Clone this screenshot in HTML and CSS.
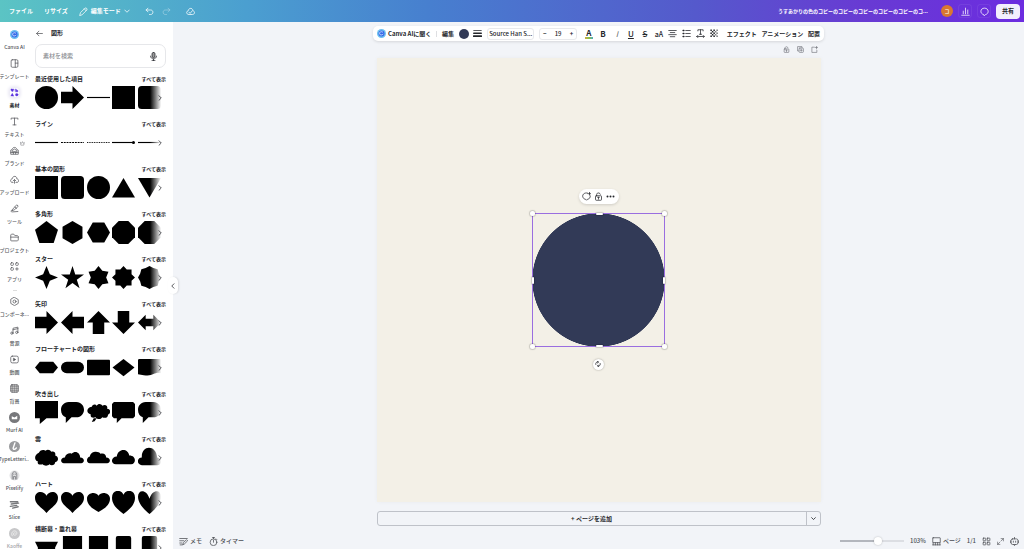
FILE: index.html
```html
<!DOCTYPE html>
<html lang="ja">
<head>
<meta charset="utf-8">
<title>デザインエディター</title>
<link rel="stylesheet" href="styles.css">
</head>
<body>
<svg class="defs" aria-hidden="true">
  <symbol id="circle" viewBox="0 0 24 24"><circle cx="12" cy="12" r="12"/></symbol>
  <symbol id="square" viewBox="0 0 24 24"><path d="M0 0h24v24H0z"/></symbol>
  <symbol id="rounded" viewBox="0 0 24 24"><rect width="24" height="24" rx="4"/></symbol>
  <symbol id="arrow-r" viewBox="0 0 24 24"><path d="M0 6h12V0l12 12-12 12v-6H0z"/></symbol>
  <symbol id="arrow-l" viewBox="0 0 24 24"><path d="M24 6H12V0L0 12l12 12v-6h12z"/></symbol>
  <symbol id="arrow-u" viewBox="0 0 24 24"><path d="M6 24V12H0L12 0l12 12h-6v12z"/></symbol>
  <symbol id="arrow-d" viewBox="0 0 24 24"><path d="M6 0v12H0l12 12 12-12h-6V0z"/></symbol>
  <symbol id="arrow-h" viewBox="0 0 24 24"><path d="M0 12l8-8v4h8V4l8 8-8 8v-4H8v4z"/></symbol>
  <symbol id="line" viewBox="0 0 24 24"><path d="M0 11.400h24v1.200H0z"/></symbol>
  <symbol id="line-dash" viewBox="0 0 24 24"><path d="M0 12h24" stroke="#000" stroke-width="1.300" stroke-dasharray="2 .9"/></symbol>
  <symbol id="line-dot" viewBox="0 0 24 24"><path d="M0 12h24" stroke="#000" stroke-width="1" stroke-dasharray="1 .8"/></symbol>
  <symbol id="line-end" viewBox="0 0 24 24"><path d="M0 11.400h21v1.200H0z"/><circle cx="22.400" cy="12" r="1.600"/></symbol>
  <symbol id="triangle" viewBox="0 0 24 24"><path d="M12 2l12 20.500H0z"/></symbol>
  <symbol id="triangle-d" viewBox="0 0 24 24"><path d="M0 2h24L12 22.500z"/></symbol>
  <symbol id="pentagon" viewBox="0 0 24 24"><path d="M12 0l12 9-4.500 14h-15L0 9z"/></symbol>
  <symbol id="hex-v" viewBox="0 0 24 24"><path d="M12 0l10.400 6v12L12 24 1.600 18V6z"/></symbol>
  <symbol id="hex-h" viewBox="0 0 24 24"><path d="M6 1.600h12L24 12l-6 10.400H6L0 12z"/></symbol>
  <symbol id="octagon" viewBox="0 0 24 24"><path d="M7 0h10l7 7v10l-7 7H7l-7-7V7z"/></symbol>
  <symbol id="star4" viewBox="0 0 24 24"><path d="M12 0l3.500 8.500L24 12l-8.500 3.500L12 24l-3.500-8.500L0 12l8.500-3.500z"/></symbol>
  <symbol id="star5" viewBox="0 0 24 24"><path d="M12 0l2.900 8.900H24l-7.500 5.500 2.900 8.900L12 17.800l-7.400 5.500 2.900-8.900L0 8.900h9.100z"/></symbol>
  <symbol id="star6" viewBox="0 0 24 24"><path d="M12 0l4 5 6.400 1L20 12l2.400 6-6.400 1-4 5-4-5-6.400-1L4 12 1.600 6 8 5z"/></symbol>
  <symbol id="star8" viewBox="0 0 24 24"><path d="M12 0l3.400 3.700h5v5L24 12l-3.600 3.400v5h-5L12 24l-3.400-3.600h-5v-5L0 12l3.600-3.400v-5h5z"/></symbol>
  <symbol id="star10" viewBox="0 0 24 24"><path d="M12 0l4 2.200 4.500 1.300 1.300 4.500L24 12l-2.200 4-1.300 4.500-4.500 1.300L12 24l-4-2.200-4.500-1.300L2.200 16 0 12l2.200-4 1.300-4.500L8 2.200z"/></symbol>
  <symbol id="flow-prep" viewBox="0 0 24 24"><path d="M5 6h14l5 6-5 6H5l-5-6z"/></symbol>
  <symbol id="flow-term" viewBox="0 0 24 24"><rect y="6" width="24" height="12" rx="6"/></symbol>
  <symbol id="flow-proc" viewBox="0 0 24 24"><rect y="4" width="24" height="16" rx="1"/></symbol>
  <symbol id="flow-dec" viewBox="0 0 24 24"><path d="M12 3l11.500 9L12 21 .5 12z"/></symbol>
  <symbol id="flow-doc" viewBox="0 0 24 24"><path d="M1 3h22l1 1v14c-7-2-8 4-18 2l-6-1V4z"/></symbol>
  <symbol id="say-square" viewBox="0 0 24 24"><path d="M0 0h24v18H12l-7 6v-6H0z"/></symbol>
  <symbol id="say-oval" viewBox="0 0 24 24"><path d="M8 1h8c5 0 8 4 8 8s-3 8-8 8h-5l-6 6v-6C2 16 0 13 0 9s3-8 8-8z"/></symbol>
  <symbol id="say-cloud" viewBox="0 0 24 24"><path d="M5 6c1-3 4-3 5-1 2-3 5-2 6 0 3-2 6 0 5 3 4 0 4 5 1 6 0 4-4 4-6 3-2 3-6 2-7 0-3 1-6 0-5-3-5-1-5-7 1-8zM7 18h3l-2 3-3 1z"/></symbol>
  <symbol id="say-round" viewBox="0 0 24 24"><path d="M2 1h20l2 2v13l-2 2H10l-5 5v-5H2l-2-2V3z"/></symbol>
  <symbol id="cloud1" viewBox="0 0 24 24"><path d="M4 7c2-4 6-3 7-2 2-2 5-1 6 1 3-1 5 1 4 4 4 1 4 6 0 7 0 3-4 4-6 2-2 2-5 2-7 0-3 1-6 0-5-3-4-1-4-7 1-9z"/></symbol>
  <symbol id="cloud2" viewBox="0 0 24 24"><path d="M3 18c-4 0-4-6 1-6 1-4 5-5 7-4 4-4 9-1 9 4 5 0 5 6 1 6z"/></symbol>
  <symbol id="cloud3" viewBox="0 0 24 24"><path d="M3 18c-4 0-4-6 0-7 1-6 9-6 11-3 4-1 6 1 6 4 5 0 5 6 1 6z"/></symbol>
  <symbol id="cloud4" viewBox="0 0 24 24"><path d="M4 19c-6 0-5-8 1-8C6 2 17 2 18 10c8 0 7 9 2 9z"/></symbol>
  <symbol id="cloud5" viewBox="0 0 24 24"><path d="M4 20c-6-1-5-8 0-8C3-1 19-2 20 12c6 1 5 8 0 8z"/></symbol>
  <symbol id="heart" viewBox="0 0 24 24"><path d="M12 23C7 17 0 14 0 7c0-7 9-8 12-2 3-6 12-5 12 2 0 7-7 10-12 16z"/></symbol>
  <symbol id="heart-s" viewBox="0 0 24 24"><path d="M12 22C5 18 0 14 0 8c0-6 9-8 12-3 3-5 12-3 12 3 0 6-5 10-12 14z"/></symbol>
  <symbol id="heart-t" viewBox="0 0 24 24"><path d="M12 24C7 20 0 15 0 7c0-9 10-9 12-3 2-6 12-6 12 3 0 8-7 13-12 17z"/></symbol>
  <symbol id="heart-n" viewBox="0 0 24 24"><path d="M12 24C7 20 0 13 0 6c0-8 9-8 12 2 3-10 12-10 12-2 0 7-7 14-12 18z"/></symbol>
  <symbol id="banner" viewBox="0 0 24 24"><path d="M0 6h24l-3 6v12H3V12z"/></symbol>
  <symbol id="banner-v" viewBox="0 0 24 24"><path d="M2 0h20v24H2z"/></symbol>
  <symbol id="banner-r" viewBox="0 0 24 24"><rect x="4" width="16" height="26" rx="2"/></symbol>
  <symbol id="chev-r" viewBox="0 0 24 24"><path d="M8 3l9 9-9 9"/></symbol>
  <symbol id="chev-l" viewBox="0 0 24 24"><path d="M16 3l-9 9 9 9"/></symbol>
  <symbol id="chev-d" viewBox="0 0 24 24"><path d="M3 8l9 9 9-9"/></symbol>
  <symbol id="pencil" viewBox="0 0 24 24"><path d="M2 22l2-7L16 3c3-2 7 2 5 5L9 20zM14 5l5 5"/></symbol>
  <symbol id="lock" viewBox="0 0 24 24"><rect x="4" y="10" width="16" height="12" rx="2"/><path d="M7 10V7c0-6 9-6 10-1M12 14v5M9.500 14h5"/></symbol>
  <symbol id="ai" viewBox="0 0 24 24"><circle cx="12" cy="12" r="12" fill="#6cc0f0" stroke="none"/><circle cx="12" cy="12" r="8" fill="#3568e8" stroke="none"/><path d="M15 8c-5-3-9 1-8 5 1 4 6 4 9 1" stroke="#e3f3ff" stroke-width="2"/></symbol>
</svg>

<header class="header">
  <nav class="menu">
    <button>ファイル</button>
    <button>リサイズ</button>
    <button class="mode"><svg class="ico s9"><use href="#pencil"/></svg>編集モード<svg class="ico s6"><use href="#chev-d"/></svg></button>
    <button aria-label="元に戻す"><svg class="ico s9" viewBox="0 0 24 24"><path d="M8 3L3 8l5 5M3 8h12c8 0 8 12 0 12h-3"/></svg></button>
    <button class="dim" aria-label="やり直し"><svg class="ico s9" viewBox="0 0 24 24"><path d="M16 3l5 5-5 5M21 8H9C1 8 1 20 9 20h3"/></svg></button>
    <button class="saved" aria-label="保存済み"><svg class="ico s9" viewBox="0 0 24 24"><path d="M7 20c-7 0-7-9-1-10C7 1 19 2 18 10c7 1 6 10 0 10zM8 14l3 3 5-6"/></svg></button>
  </nav>
  <div class="account">
    <span class="doc-title">うすあかりの色のコピーのコピーのコピーのコピーのコピーのコ...</span>
    <button class="avatar">コ</button>
    <button class="outline" aria-label="分析"><svg class="ico s9" viewBox="0 0 24 24"><path d="M2 22h20M6 18v-7M12 18V3M18 18V8"/></svg></button>
    <button class="outline" aria-label="コメント"><svg class="ico s9" viewBox="0 0 24 24"><path d="M9 20c-10-2-9-17 3-17s13 15 3 17l-3 3z"/></svg></button>
    <button class="share">共有</button>
  </div>
</header>

<div class="workspace">
  <nav class="rail">
    <a href="#"><svg class="ico s9"><use href="#ai"/></svg>Canva AI</a>
    <a href="#"><svg class="ico s9" viewBox="0 0 24 24"><rect x="3" y="2" width="18" height="20" rx="3"/><path d="M14 2v20M14 11h7"/></svg>テンプレート</a>
    <a href="#" class="active"><svg class="ico s9" viewBox="0 0 24 24"><path d="M6 10L2 5c0-4 4-3 4-1 0-2 4-3 4 1zM14 3h3v3h4v4h-6zM2 21l4-7 4 7z"/><circle cx="18" cy="18" r="3.500"/></svg>素材</a>
    <a href="#"><svg class="ico s9" viewBox="0 0 24 24"><path d="M3 6V3h18v3M12 3v18M8 21h8"/></svg>テキスト</a>
    <a href="#"><svg class="ico s9" viewBox="0 0 24 24"><path d="M2 21V11l4-2c1-7 11-7 12 0l4 2v10zM6 17v-5l6-4 6 4v5M2 17h20M9 21v-6h6v6"/></svg>ブランド<svg class="ico crown" viewBox="0 0 24 24"><path d="M3 7l5 4 4-8 4 8 5-4-3 13H6z"/></svg></a>
    <a href="#"><svg class="ico s9" viewBox="0 0 24 24"><path d="M8 20H6c-6-1-6-9 0-10C7 1 19 2 18 10c7 1 6 10 0 10h-2M12 22v-9M8 16l4-4 4 4"/></svg>アップロード</a>
    <a href="#"><svg class="ico s9" viewBox="0 0 24 24"><path d="M8 13L18 2l4 4-11 10-4 1zM7 17c-6-2-6 5 0 4l14-1M13 8l4 4"/></svg>ツール</a>
    <a href="#"><svg class="ico s9" viewBox="0 0 24 24"><path d="M2 19V5l2-2h6l3 4h7l2 2v10l-2 2H4zM2 11h20"/></svg>プロジェクト</a>
    <a href="#"><svg class="ico s9" viewBox="0 0 24 24"><rect x="2" y="2" width="7" height="7" rx="2"/><rect x="15" y="2" width="7" height="7" rx="2"/><rect x="2" y="15" width="7" height="7" rx="2"/><path d="M18.500 15v7M15 18.500h7"/></svg>アプリ</a>
    <hr>
    <a href="#"><svg class="ico s9" viewBox="0 0 24 24"><path d="M12 1l10 6v10l-10 6-10-6V7z"/><circle cx="12" cy="12" r="4"/></svg>コンポーネ...</a>
    <a href="#"><svg class="ico s9" viewBox="0 0 24 24"><path d="M8 19V6l13-3v13M8 10l13-3"/><circle cx="5" cy="19" r="3"/><circle cx="18" cy="17" r="3"/></svg>音源</a>
    <a href="#"><svg class="ico s9" viewBox="0 0 24 24"><rect x="2" y="3" width="20" height="18" rx="4"/><path d="M10 9l5 3-5 3z" fill="currentColor"/></svg>動画</a>
    <a href="#"><svg class="ico s9" viewBox="0 0 24 24"><rect x="2" y="2" width="20" height="20" rx="3" fill="#ccc"/><path d="M2 7h20M2 12h20M2 17h20M7 2v20M12 2v20M17 2v20" stroke-width="1"/></svg>背景</a>
    <a href="#"><svg class="ico s11" viewBox="0 0 24 24"><circle cx="12" cy="12" r="12" fill="#77787b" stroke="none"/><path d="M6 16V9l6 3 6-4v8z" fill="#fff" stroke="none"/></svg>Murf AI</a>
    <a href="#"><svg class="ico s11" viewBox="0 0 24 24"><circle cx="12" cy="12" r="12" fill="#9a9b9e" stroke="none"/><path d="M13 4l-4 12c0 3 5 3 7-1" stroke="#fff" stroke-width="3"/></svg>TypeLetteri...</a>
    <a href="#"><svg class="ico s11" viewBox="0 0 24 24"><circle cx="12" cy="12" r="11" fill="#e3e3e5" stroke="none"/><path d="M7 20V9c1-7 9-7 10 0v11M10 20v-6h4v6M10 9h1M14 9h1" stroke="#808186"/></svg>Pixelify</a>
    <a href="#"><svg class="ico s11" viewBox="0 0 24 24"><path d="M3 6h16M5 11l16-2M3 16l14-2M8 20l12-3" stroke="#77787b" stroke-width="3"/></svg>Slice</a>
    <a href="#" class="fading"><svg class="ico s11" viewBox="0 0 24 24"><circle cx="12" cy="12" r="12" fill="#9a9b9e" stroke="none"/><path d="M7 17c-4-6 2-13 8-10 5 4 0 11-5 8-2-3 1-6 4-4" stroke="#ddd"/></svg>Kaoffe</a>
  </nav>

  <aside class="panel">
    <div class="panel-title"><button aria-label="戻る"><svg class="ico s7" viewBox="0 0 24 24"><path d="M22 12H3M10 4l-8 8 8 8"/></svg></button><h1>図形</h1></div>
    <label class="search"><input type="text" placeholder="素材を検索" aria-label="素材を検索"><svg class="ico s9" viewBox="0 0 24 24"><rect x="8" y="1" width="8" height="14" rx="4" fill="#999"/><path d="M4 11c0 10 16 10 16 0M12 19v4M8 23h8"/></svg></label>

    <section><div class="head"><h2>最近使用した項目</h2><a href="#">すべて表示</a></div><div class="shapes"><svg><use href="#circle"/></svg><svg><use href="#arrow-r"/></svg><svg><use href="#line"/></svg><svg><use href="#square"/></svg><svg><use href="#rounded"/></svg><button class="more" aria-label="次へ"><svg class="ico s6"><use href="#chev-r"/></svg></button></div></section>
    <section><div class="head"><h2>ライン</h2><a href="#">すべて表示</a></div><div class="shapes"><svg><use href="#line"/></svg><svg><use href="#line-dash"/></svg><svg><use href="#line-dot"/></svg><svg><use href="#line-end"/></svg><svg><use href="#line"/></svg><button class="more" aria-label="次へ"><svg class="ico s6"><use href="#chev-r"/></svg></button></div></section>
    <section><div class="head"><h2>基本の図形</h2><a href="#">すべて表示</a></div><div class="shapes"><svg><use href="#square"/></svg><svg><use href="#rounded"/></svg><svg><use href="#circle"/></svg><svg><use href="#triangle"/></svg><svg><use href="#triangle-d"/></svg><button class="more" aria-label="次へ"><svg class="ico s6"><use href="#chev-r"/></svg></button></div></section>
    <section><div class="head"><h2>多角形</h2><a href="#">すべて表示</a></div><div class="shapes"><svg><use href="#pentagon"/></svg><svg><use href="#hex-v"/></svg><svg><use href="#hex-h"/></svg><svg><use href="#octagon"/></svg><svg><use href="#octagon"/></svg><button class="more" aria-label="次へ"><svg class="ico s6"><use href="#chev-r"/></svg></button></div></section>
    <section><div class="head"><h2>スター</h2><a href="#">すべて表示</a></div><div class="shapes"><svg><use href="#star4"/></svg><svg><use href="#star5"/></svg><svg><use href="#star6"/></svg><svg><use href="#star8"/></svg><svg><use href="#star10"/></svg><button class="more" aria-label="次へ"><svg class="ico s6"><use href="#chev-r"/></svg></button></div></section>
    <section><div class="head"><h2>矢印</h2><a href="#">すべて表示</a></div><div class="shapes"><svg><use href="#arrow-r"/></svg><svg><use href="#arrow-l"/></svg><svg><use href="#arrow-u"/></svg><svg><use href="#arrow-d"/></svg><svg><use href="#arrow-h"/></svg><button class="more" aria-label="次へ"><svg class="ico s6"><use href="#chev-r"/></svg></button></div></section>
    <section><div class="head"><h2>フローチャートの図形</h2><a href="#">すべて表示</a></div><div class="shapes"><svg><use href="#flow-prep"/></svg><svg><use href="#flow-term"/></svg><svg><use href="#flow-proc"/></svg><svg><use href="#flow-dec"/></svg><svg><use href="#flow-doc"/></svg><button class="more" aria-label="次へ"><svg class="ico s6"><use href="#chev-r"/></svg></button></div></section>
    <section><div class="head"><h2>吹き出し</h2><a href="#">すべて表示</a></div><div class="shapes"><svg><use href="#say-square"/></svg><svg><use href="#say-oval"/></svg><svg><use href="#say-cloud"/></svg><svg><use href="#say-round"/></svg><svg><use href="#say-oval"/></svg><button class="more" aria-label="次へ"><svg class="ico s6"><use href="#chev-r"/></svg></button></div></section>
    <section><div class="head"><h2>雲</h2><a href="#">すべて表示</a></div><div class="shapes"><svg><use href="#cloud1"/></svg><svg><use href="#cloud2"/></svg><svg><use href="#cloud3"/></svg><svg><use href="#cloud4"/></svg><svg><use href="#cloud5"/></svg><button class="more" aria-label="次へ"><svg class="ico s6"><use href="#chev-r"/></svg></button></div></section>
    <section><div class="head"><h2>ハート</h2><a href="#">すべて表示</a></div><div class="shapes"><svg><use href="#heart"/></svg><svg><use href="#heart"/></svg><svg><use href="#heart-s"/></svg><svg><use href="#heart-t"/></svg><svg><use href="#heart-n"/></svg><button class="more" aria-label="次へ"><svg class="ico s6"><use href="#chev-r"/></svg></button></div></section>
    <section><div class="head"><h2>横断幕・垂れ幕</h2><a href="#">すべて表示</a></div><div class="shapes"><svg><use href="#banner"/></svg><svg><use href="#banner-v"/></svg><svg><use href="#banner-v"/></svg><svg><use href="#banner-r"/></svg><svg><use href="#banner-r"/></svg><button class="more" aria-label="次へ"><svg class="ico s6"><use href="#chev-r"/></svg></button></div></section>
  </aside>

  <main class="stage">
    <button class="collapse" aria-label="パネルを閉じる"><svg class="ico s6"><use href="#chev-l"/></svg></button>
    <div class="toolbar">
      <button class="ask"><svg class="ico s9"><use href="#ai"/></svg>Canva AIに聞く</button>
      <span class="sep"></span>
      <button>編集</button>
      <button class="swatch" aria-label="カラー"></button>
      <button aria-label="線の太さ"><svg class="ico s9" viewBox="0 0 24 24"><path d="M2 4h20" stroke-width="2"/><path d="M2 11h20" stroke-width="4"/><path d="M2 19h20" stroke-width="5"/></svg></button>
      <button class="field font">Source Han S...</button>
      <div class="field size"><button aria-label="小さく">−</button><input type="text" value="19" aria-label="フォントサイズ"><button aria-label="大きく">+</button></div>
      <div class="tools">
        <button class="tcolor" aria-label="テキストの色"><span>A</span></button>
        <button class="glyph"><b>B</b></button>
        <button class="glyph thin"><i>I</i></button>
        <button class="glyph"><u>U</u></button>
        <button class="glyph"><s>S</s></button>
        <button class="glyph aa">aA</button>
        <button aria-label="配置中央"><svg class="ico s9" viewBox="0 0 24 24"><path d="M2 4h20M6 9.500h12M2 15h20M6 20.500h12"/></svg></button>
        <button aria-label="リスト"><svg class="ico s9" viewBox="0 0 24 24"><path d="M10 4h12M10 12h12M10 20h12"/><path d="M3 4h2M3 12h2M3 20h2" stroke-width="4"/></svg></button>
        <button aria-label="スペース"><svg class="ico s9" viewBox="0 0 24 24"><path d="M5 5V2h14v3M12 2v12M9 14h6M2 20h20M5 17l-3 3 3 3M19 17l3 3-3 3"/></svg></button>
        <button aria-label="透明度"><svg class="ico s9" viewBox="0 0 24 24"><g fill="currentColor" stroke="none"><path d="M1 1h4v4H1zM9 1h4v4H9zM5 5h4v4H5zM1 9h4v4H1zM9 9h4v4H9zM5 13h4v4H5zM1 17h4v4H1zM9 17h4v4H9z"/><path d="M17 1h4v4h-4zM13 5h4v4h-4zM17 9h4v4h-4zM13 13h4v4h-4zM17 17h4v4h-4z" opacity=".6"/></g></svg></button>
      </div>
      <button>エフェクト</button>
      <button>アニメーション</button>
      <button>配置</button>
    </div>

    <div class="page">
      <div class="page-tools">
        <button aria-label="ロック"><svg class="ico s7"><use href="#lock"/></svg></button>
        <button aria-label="複製"><svg class="ico s7" viewBox="0 0 24 24"><path d="M5 17H2V2h15v4"/><rect x="7" y="7" width="15" height="15" rx="3"/><path d="M14.500 11v7M11 14.500h7"/></svg></button>
        <button aria-label="ページを追加"><svg class="ico s7" viewBox="0 0 24 24"><path d="M11 4H3v18h17v-7M19 1v9M14 5h9"/></svg></button>
      </div>
      <div class="canvas">
        <div class="selection">
          <i class="h tl"></i><i class="h tr"></i><i class="h bl"></i><i class="h br"></i>
          <i class="bar t"></i><i class="bar b"></i><i class="bar l"></i><i class="bar r"></i>
          <div class="float">
            <button aria-label="コメント"><svg class="ico s9" viewBox="0 0 24 24"><path d="M15 3C5 0-1 9 3 15c2 4 5 4 6 4l3 3 3-3c5 0 8-5 7-9M20 1v7M16 4.500h7"/></svg></button>
            <button aria-label="ロック"><svg class="ico s9"><use href="#lock"/></svg></button>
            <button aria-label="その他"><svg class="ico s9" viewBox="0 0 24 24"><g fill="currentColor" stroke="none"><circle cx="4" cy="12" r="2.600"/><circle cx="12" cy="12" r="2.600"/><circle cx="20" cy="12" r="2.600"/></g></svg></button>
          </div>
          <button class="rotate" aria-label="回転"><svg class="ico s6" viewBox="0 0 24 24"><path d="M3 14C1 7 7 2 13 4M9 1l5 3-4 4M21 10c2 7-4 12-10 10M15 23l-5-3 4-4"/></svg></button>
        </div>
      </div>
      <div class="add-page"><button class="add">+ ページを追加</button><button class="add-menu" aria-label="ページの種類"><svg class="ico s5"><use href="#chev-d"/></svg></button></div>
    </div>

    <footer class="footer">
      <div class="group">
        <button><svg class="ico s9" viewBox="0 0 24 24"><path d="M2 4h20M2 10h11M2 16h6M10 20l2-5 8-8 3 3-8 8zM3 21h5"/></svg>メモ</button>
        <button><svg class="ico s9" viewBox="0 0 24 24"><circle cx="12" cy="14" r="9"/><path d="M12 14V9M9 1h6M12 1v4M19 5l2 2"/></svg>タイマー</button>
      </div>
      <div class="group right">
        <input class="zoom" type="range" min="0" max="100" value="60" aria-label="ズーム">
        <button>103%</button>
        <button><svg class="ico s9" viewBox="0 0 24 24"><rect x="2" y="2" width="20" height="13" rx="1"/><path d="M2 21h20M3 15v6M9 15v6M15 15v6M21 15v6"/></svg>ページ</button>
        <span>1/1</span>
        <button aria-label="グリッド"><svg class="ico s9" viewBox="0 0 24 24"><rect x="3" y="3" width="7" height="7" rx="1"/><rect x="14" y="3" width="7" height="7" rx="1"/><rect x="3" y="14" width="7" height="7" rx="1"/><rect x="14" y="14" width="7" height="7" rx="1"/></svg></button>
        <button aria-label="全画面"><svg class="ico s7" viewBox="0 0 24 24"><path d="M14 2h8v8M22 2l-8 8M10 22H2v-8M2 22l8-8"/></svg></button>
        <button aria-label="アシスタント"><svg class="ico s9" viewBox="0 0 24 24"><rect x="3" y="5" width="18" height="15" rx="4"/><path d="M12 5V1M1 10v5M23 10v5M9 11v3M15 11v3M10 20l2 3 2-3"/></svg></button>
      </div>
    </footer>
  </main>
</div>
</body>
</html>
```
FILE: styles.css
```css
* { box-sizing: border-box; }
html, body { margin: 0; height: 100%; }
body {
  display: flex;
  flex-direction: column;
  overflow: hidden;
  background: #f2f4f8;
  color: #24262b;
  font: 500 6px/10px "Noto Sans CJK JP", "Noto Sans", sans-serif;
}
button, input { font: inherit; color: inherit; }
button {
  display: inline-flex;
  align-items: center;
  justify-content: center;
  padding: 0;
  border: 0;
  background: none;
  white-space: nowrap;
}
a { color: inherit; text-decoration: none; }
h1, h2 { margin: 0; font-size: 6px; font-weight: 700; }
.defs { position: absolute; width: 0; height: 0; }
.ico {
  flex: none;
  fill: none;
  stroke: currentColor;
  stroke-width: 2;
  stroke-linecap: round;
  stroke-linejoin: round;
}
.s5 { width: 5px; height: 5px; stroke-width: 4; }
.s6 { width: 6px; height: 6px; stroke-width: 3; }
.s7 { width: 7px; height: 7px; }
.s9 { width: 9px; height: 9px; }
.s11 { width: 11px; height: 11px; }

.header {
  flex: none;
  display: flex;
  justify-content: space-between;
  align-items: center;
  height: 22px;
  padding: 0 4px 0 9px;
  color: #fff;
  background: linear-gradient(90deg, #5bc4c4 0%, #4b9fd0 24%, #477fcf 42%, #5559cc 68%, #683bd3 84%, #6c2ce0 100%);
}
.menu, .account { display: flex; align-items: center; }
.menu { gap: 11px; font-weight: 700; }
.mode { gap: 3px; }
.menu > .mode + button { margin-left: 4px; }
.menu > .dim { margin-left: -3px; color: #ffffff66; }
.menu > .saved { margin-left: 4px; }
.account { gap: 5px; }
.doc-title { margin-right: 8px; font-size: 5px; font-weight: 700; }
.avatar { width: 12px; height: 12px; border-radius: 50%; background: #d97730; font-size: 5px; }
.outline { width: 14px; height: 14px; border: 1px solid #ffffff12; border-radius: 3px; }
.share {
  width: 24px;
  height: 15px;
  border-radius: 4px;
  background: #f3effd;
  color: #24262b;
  font-weight: 700;
}

.workspace { flex: 1; display: flex; min-height: 0; }
.rail {
  flex: none;
  display: flex;
  flex-direction: column;
  width: 29px;
  padding-top: 7px;
  overflow: hidden;
  background: #fff;
  color: #55575c;
}
.rail a {
  flex: none;
  display: flex;
  flex-direction: column;
  align-items: center;
  justify-content: space-between;
  position: relative;
  height: 22px;
  margin-bottom: 7px;
  padding-top: 1px;
  font-size: 5px;
  line-height: 8px;
  white-space: nowrap;
}
.rail .s11 { margin-top: -1px; }
.rail .active { color: #24262b; font-weight: 700; }
.rail .active svg {
  color: #5a32e0;
  fill: currentColor;
  border-radius: 3px;
  box-shadow: 0 0 3px 2px #ecebf5;
  stroke-width: 1;
}
.rail .crown { position: absolute; right: 4px; top: -4px; width: 5px; height: 5px; }
.rail .fading { opacity: .55; }
.rail hr { flex: none; width: 4px; height: 1px; margin: 0 auto 5px; border: 0; background: #ddd; }

.panel {
  flex: none;
  width: 144px;
  padding: 6px 7px 0 6px;
  overflow: hidden;
  background: #fff;
}
.panel-title { display: flex; align-items: center; gap: 8px; padding-left: 1px; }
.search {
  display: flex;
  align-items: center;
  height: 24px;
  margin: 6px 0 6px;
  padding: 0 7px;
  border: 1px solid #e6e7ea;
  border-radius: 7px;
}
.search input { flex: 1; min-width: 0; padding: 0; border: 0; outline: 0; background: none; }
.search input::placeholder { color: #8b8d92; opacity: 1; }
.panel section { height: 45px; }
.head { display: flex; justify-content: space-between; align-items: center; }
.head a { font-size: 5px; font-weight: 700; }
.shapes {
  display: flex;
  justify-content: space-between;
  position: relative;
  margin: 2px 5px 0 0;
}
.shapes > svg { width: 23px; height: 23px; }
.more {
  position: absolute;
  right: -5px;
  top: 0;
  width: 16px;
  height: 23px;
  justify-content: flex-end;
  background: linear-gradient(90deg, #fff0, #fff 70%);
}
.more .ico { margin-right: 3px; }

.stage {
  flex: 1;
  display: flex;
  flex-direction: column;
  align-items: center;
  position: relative;
  min-width: 0;
  padding-top: 4px;
}
.collapse {
  position: absolute;
  left: -5px;
  top: 255px;
  width: 10px;
  height: 17px;
  border-radius: 5px;
  background: #fff;
  box-shadow: 1px 0 2px #0000001c;
}
.toolbar {
  display: flex;
  align-items: center;
  justify-content: space-between;
  width: 53%;
  min-width: 450px;
  height: 15px;
  padding: 0 4px;
  border-radius: 5px;
  background: #fff;
  box-shadow: 0 1px 3px #0000001f;
  font-weight: 700;
}
.ask { gap: 2px; }
.sep { width: 1px; height: 6px; background: #dedfe2; }
.swatch { width: 10px; height: 10px; border-radius: 50%; background: #323a57; }
.field { height: 12px; border: 1px solid #e8e9ec; border-radius: 3px; }
.font { padding: 0 1px; font-weight: 500; }
.size { display: flex; align-items: center; justify-content: space-around; width: 38px; }
.size input { width: 12px; padding: 0; border: 0; text-align: center; font-weight: 500; }
.tools { display: flex; align-items: center; }
.tools button { width: 14px; height: 12px; }
.glyph { font-size: 8px; font-weight: 500; }
.thin { font-weight: 400; color: #666; }
.tools .aa { font-size: 7px; }
.tcolor span {
  width: 8px;
  border-bottom: 2px solid;
  border-image: linear-gradient(90deg, #e8a13c, #8bc34a, #3aa0e8) 1;
  font-size: 8px;
  line-height: 8px;
}

.page { width: 52%; min-width: 444px; max-width: 444px; }
.page-tools {
  display: flex;
  justify-content: flex-end;
  gap: 7px;
  height: 17px;
  padding-right: 3px;
  align-items: center;
  color: #66686e;
}
.canvas {
  position: relative;
  aspect-ratio: 1;
  background: #f3f0e7;
  box-shadow: 0 0 4px #0000000a;
}
.selection {
  position: absolute;
  inset: 35%;
  border: 1px solid #9a6ee0;
  background: radial-gradient(closest-side, #323a57 99%, #323a5700 100%) border-box no-repeat;
}
.h, .bar { position: absolute; background: #fff; box-shadow: 0 0 1px 1px #0000002b; }
.h { width: 5px; height: 5px; border-radius: 50%; }
.tl, .tr { top: -3px; }
.bl, .br { bottom: -3px; }
.tl, .bl { left: -3px; }
.tr, .br { right: -3px; }
.t, .b { left: calc(50% - 3px); width: 7px; height: 2px; border-radius: 1px; }
.l, .r { top: calc(50% - 3px); width: 2px; height: 7px; border-radius: 1px; }
.t { top: -1px; }
.b { bottom: -1px; }
.l { left: -1px; }
.r { right: -1px; }
.float {
  display: flex;
  align-items: center;
  justify-content: space-evenly;
  position: absolute;
  left: calc(50% - 20px);
  top: -25px;
  width: 40px;
  height: 15px;
  border-radius: 8px;
  background: #fff;
  box-shadow: 0 1px 3px #00000026;
}
.rotate {
  position: absolute;
  left: calc(50% - 6px);
  bottom: -24px;
  width: 11px;
  height: 11px;
  border-radius: 50%;
  background: #fff;
  box-shadow: 0 0 2px #00000059;
}
.add-page {
  display: flex;
  margin-top: 9px;
  height: 15px;
  border: 1px solid #bfc2c9;
  border-radius: 3px;
  font-weight: 700;
}
.add { flex: 1; }
.add-menu { width: 14px; border-left: 1px solid #bfc2c9; }

.footer {
  display: flex;
  align-items: center;
  justify-content: space-between;
  width: 100%;
  margin-top: auto;
  padding: 0 5px 3px 6px;
  color: #4b4d53;
}
.group { display: flex; align-items: center; gap: 7px; }
.group button { gap: 2px; }
.right { gap: 6px; }
.zoom {
  appearance: none;
  width: 64px;
  height: 8px;
  margin: 0;
  background: linear-gradient(90deg, #b3b6bd 58%, #dcdee3 58%) center / 100% 2px no-repeat;
}
.zoom::-webkit-slider-thumb {
  appearance: none;
  width: 8px;
  height: 8px;
  border-radius: 50%;
  background: #fff;
  box-shadow: 0 0 2px #00000040;
}
```
